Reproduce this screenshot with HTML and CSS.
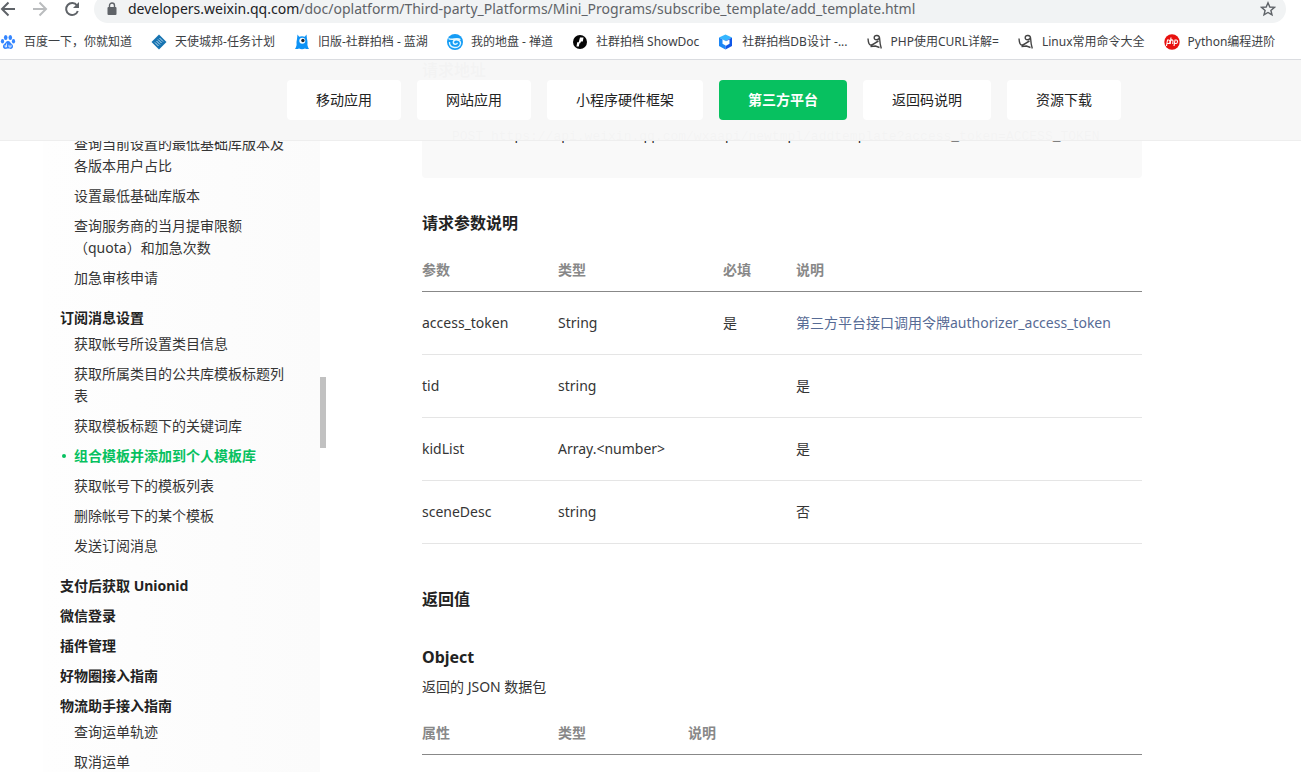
FILE: index.html
```html
<!DOCTYPE html>
<html lang="zh-CN">
<head>
    <meta charset="UTF-8">
    <meta name="viewport" content="width=device-width, initial-scale=1.0">
    <title>组合模板并添加到个人模板库</title>
    <link rel="stylesheet" href="styles.css">
</head>
<body>
    <header class="browser">
        <div class="toolbar">
            <button class="tool" aria-label="后退">
                <svg width="16" height="16" viewBox="0 0 16 16" fill="none" stroke="#5f6368" stroke-width="2"><path d="M15 8H2M8.500 1.500L2 8l6.500 6.500"/></svg>
            </button>
            <button class="tool" aria-label="前进">
                <svg width="16" height="16" viewBox="0 0 16 16" fill="none" stroke="#babcbe" stroke-width="2"><path d="M1 8h13M7.500 1.500L14 8l-6.500 6.500"/></svg>
            </button>
            <button class="tool" aria-label="重新加载">
                <svg width="16" height="16" viewBox="0 0 16 16"><path d="M13 4.500A6 6 0 1 0 13.800 10" fill="none" stroke="#5f6368" stroke-width="2"/><path d="M15 1v6H9z" fill="#5f6368"/></svg>
            </button>
            <div class="omnibox">
                <svg width="10" height="14" viewBox="0 0 10 14"><path d="M2.500 6V3.500a2.500 2.500 0 0 1 5 0V6" fill="none" stroke="#5f6368" stroke-width="1.400"/><rect x="0.500" y="5" width="9" height="8" rx="1" fill="#5f6368"/></svg>
                <span class="url"><b>developers.weixin.qq.com</b>/doc/oplatform/Third-party_Platforms/Mini_Programs/subscribe_template/add_template.html</span>
                <button class="star" aria-label="收藏">
                    <svg width="16" height="16" viewBox="0 0 16 16" fill="none" stroke="#5f6368" stroke-width="1.400"><path d="M8 1.800l1.800 4.200 4.600.4-3.500 3 1.100 4.500L8 11.500l-4 2.400 1.100-4.500-3.500-3L6.200 6z"/></svg>
                </button>
            </div>
        </div>
        <nav class="bookmarks">
            <a href="#">
                <svg width="16" height="16" viewBox="0 0 16 16" fill="#3385ff"><ellipse cx="5.700" cy="3.500" rx="1.800" ry="2.500"/><ellipse cx="10.300" cy="3.500" rx="1.800" ry="2.500"/><ellipse cx="2.500" cy="7.300" rx="1.600" ry="2.200"/><ellipse cx="13.500" cy="7.300" rx="1.600" ry="2.200"/><path d="M8 7c2 0 2.500 2 4 3.300 1.700 1.500 1.300 4.500-1.200 4.700-1.200 0-1.800-.4-2.800-.4s-1.600.4-2.800.4C2.700 14.800 2.300 11.800 4 10.300 5.500 9 6 7 8 7z"/><path d="M6.500 9.500v3.500H5.200v-2M9 10.800V13h2v-2.200" fill="none" stroke="#fff" stroke-width=".8"/></svg>
                百度一下，你就知道
            </a>
            <a href="#">
                <svg width="16" height="16" viewBox="0 0 16 16"><path d="M8 .5L15.500 8 8 15.500.5 8z" fill="#1673b1"/><path d="M4 8.500l3.500 3.500M5.500 7L9 10.500M7 5.500L10.500 9M8.500 4L12 7.500" stroke="#d3e8f5" stroke-width=".9"/></svg>
                天使城邦-任务计划
            </a>
            <a href="#">
                <svg width="16" height="16" viewBox="0 0 16 16"><path d="M3.500.5l1.700 2.200C6.800 2 9.200 2 10.800 2.700L12.500.5l.5 4.500c.6 2 .6 4 .4 6 .3 1.600.9 2.800 1.600 4-2 .3-3 0-4-.6-1.900 1.100-4.100 1.100-6 0-1 .6-2 .9-4 .6.700-1.200 1.300-2.400 1.600-4-.2-2-.2-4 .4-6z" fill="#0d92f5"/><circle cx="8.300" cy="6.800" r="3" fill="#fff"/><circle cx="8.900" cy="6.500" r="1.700" fill="#1b2733"/></svg>
                旧版-社群拍档 - 蓝湖
            </a>
            <a href="#">
                <svg width="16" height="16" viewBox="0 0 16 16"><circle cx="8" cy="8" r="8" fill="#149cf5"/><path d="M1.500 4.500c3.500 2.500 7.500-1.500 12 1M2.500 8c-.5 6.500 10 7.500 11 1.500.3-4-6.500-5-7.200-1.500-.2 2.800 3.900 3 4 .7" fill="none" stroke="#e5f8ff" stroke-width="1.400"/></svg>
                我的地盘 - 禅道
            </a>
            <a href="#">
                <svg width="16" height="16" viewBox="0 0 16 16"><circle cx="8" cy="8" r="7" fill="#050505"/><path d="M8 3.500h3.500L10.800 7.500H9L8.200 9.300H7.500L6.800 12.500H4.500L5.200 8.200H6.700z" fill="#fff"/></svg>
                社群拍档 ShowDoc
            </a>
            <a href="#">
                <svg width="16" height="16" viewBox="0 0 16 16"><path d="M7.500.5L14 3.500 7.500 7 1 3.500z" fill="#35b6ff"/><path d="M1 3.500L7.500 7v8.500L1 12z" fill="#1c86f5"/><path d="M14 3.500L7.500 7v8.500L14 12z" fill="#1157e8"/><path d="M4.500 5.500L8 7.200l3.500-1.700v4.200L8 11.700 4.500 9.700z" fill="#fff"/></svg>
                社群拍档DB设计 -...
            </a>
            <a href="#">
                <svg width="16" height="16" viewBox="0 0 16 16" fill="none" stroke="#444" stroke-width="1.400"><path d="M1 4.500c.3 4 1 7 3.500 6.500S9 8 11.500 7M12.500 4c0-3-5-3.500-5.300-.5-.2 3 4.500 3 5.300 0 .2 3 .5 7 1.800 11M3.500 12.500l5-.5 4 1.500"/></svg>
                PHP使用CURL详解=
            </a>
            <a href="#">
                <svg width="16" height="16" viewBox="0 0 16 16" fill="none" stroke="#444" stroke-width="1.400"><path d="M1 4.500c.3 4 1 7 3.500 6.500S9 8 11.500 7M12.500 4c0-3-5-3.500-5.300-.5-.2 3 4.500 3 5.300 0 .2 3 .5 7 1.800 11M3.500 12.500l5-.5 4 1.500"/></svg>
                Linux常用命令大全
            </a>
            <a href="#">
                <svg width="16" height="16" viewBox="0 0 16 16"><circle cx="8" cy="8" r="7.700" fill="#e8110f"/><path d="M2.500 12l1-6h1.300c1.600 0 1.500 3.500-.2 3.500H3.300M7 3.500L6.200 10M6.500 7c.5-1.500 2.700-1.500 2.500.3L8.700 10M10 12l1-6h1.300c1.700 0 1.500 3.500-.2 3.500h-1.300" fill="none" stroke="#fff" stroke-width="1.100"/></svg>
                Python编程进阶
            </a>
        </nav>
    </header>

    <div class="page">
        <nav class="tabs">
            <a href="#">移动应用</a>
            <a href="#">网站应用</a>
            <a href="#">小程序硬件框架</a>
            <a href="#" class="active">第三方平台</a>
            <a href="#">返回码说明</a>
            <a href="#">资源下载</a>
        </nav>

        <aside class="sidebar">
            <div class="menu">
                <section>
                    <ul class="first">
                        <li><a href="#">查询当前设置的最低基础库版本及各版本用户占比</a></li>
                        <li><a href="#">设置最低基础库版本</a></li>
                        <li><a href="#">查询服务商的当月提审限额（quota）和加急次数</a></li>
                        <li><a href="#">加急审核申请</a></li>
                    </ul>
                </section>
                <section>
                    <h4>订阅消息设置</h4>
                    <ul>
                        <li><a href="#">获取帐号所设置类目信息</a></li>
                        <li><a href="#">获取所属类目的公共库模板标题列表</a></li>
                        <li><a href="#">获取模板标题下的关键词库</a></li>
                        <li class="current"><a href="#">组合模板并添加到个人模板库</a></li>
                        <li><a href="#">获取帐号下的模板列表</a></li>
                        <li><a href="#">删除帐号下的某个模板</a></li>
                        <li><a href="#">发送订阅消息</a></li>
                    </ul>
                </section>
                <section><h4>支付后获取 Unionid</h4></section>
                <section><h4>微信登录</h4></section>
                <section><h4>插件管理</h4></section>
                <section><h4>好物圈接入指南</h4></section>
                <section>
                    <h4>物流助手接入指南</h4>
                    <ul>
                        <li><a href="#">查询运单轨迹</a></li>
                        <li><a href="#">取消运单</a></li>
                    </ul>
                </section>
            </div>
            <div class="scrollbar"><div class="thumb"></div></div>
        </aside>

        <main class="content">
            <h3>请求地址</h3>
            <pre><code>POST https://api.weixin.qq.com/wxaapi/newtmpl/addtemplate?access_token=ACCESS_TOKEN</code></pre>

            <h3>请求参数说明</h3>
            <table class="params">
                <thead>
                    <tr><th>参数</th><th>类型</th><th>必填</th><th>说明</th></tr>
                </thead>
                <tbody>
                    <tr><td>access_token</td><td>String</td><td>是</td><td><a href="#">第三方平台接口调用令牌authorizer_access_token</a></td></tr>
                    <tr><td>tid</td><td>string</td><td></td><td>是</td></tr>
                    <tr><td>kidList</td><td>Array.&lt;number&gt;</td><td></td><td>是</td></tr>
                    <tr><td>sceneDesc</td><td>string</td><td></td><td>否</td></tr>
                </tbody>
            </table>

            <h3 class="returns">返回值</h3>
            <h3 class="object">Object</h3>
            <p>返回的 JSON 数据包</p>
            <table class="result">
                <thead>
                    <tr><th>属性</th><th>类型</th><th>说明</th></tr>
                </thead>
            </table>
        </main>
    </div>
</body>
</html>
```
FILE: styles.css
```css
* {
    box-sizing: border-box;
}
body {
    display: flex;
    flex-direction: column;
    height: 100vh;
    margin: 0;
    overflow: hidden;
    background-color: #fff;
    color: #353535;
    font-family: "Noto Sans", "Noto Sans CJK SC", sans-serif;
    font-size: 14px;
    line-height: 22px;
}
a {
    color: inherit;
    text-decoration: none;
}
button {
    display: flex;
    padding: 0;
    border: none;
    background: none;
    cursor: pointer;
}
svg {
    display: block;
    flex: none;
}

/* browser bar */
.browser {
    flex: none;
    border-bottom: 1px solid #dadce0;
}
.toolbar {
    display: flex;
    align-items: flex-end;
    gap: 16px;
    height: 23px;
    padding-right: 15px;
}
.tool {
    height: 28px;
    align-items: center;
}
.omnibox {
    display: flex;
    flex: 1;
    align-items: center;
    gap: 11px;
    height: 28px;
    margin-left: -2px;
    padding: 0 10px 0 13px;
    border-radius: 14px;
    background-color: #f1f3f4;
}
.url {
    flex: 1;
    color: #5f6368;
    white-space: nowrap;
}
.url b {
    color: #202124;
    font-weight: normal;
}
.bookmarks {
    display: flex;
    align-items: center;
    gap: 19px;
    height: 36px;
    padding-top: 2px;
    overflow: hidden;
    color: #3c4043;
    font-size: 12px;
    white-space: nowrap;
}
.bookmarks a {
    display: flex;
    align-items: center;
    gap: 8px;
}

/* page */
.page {
    display: flex;
    flex: 1;
    position: relative;
    min-height: 0;
    overflow: hidden;
}
.tabs {
    display: flex;
    position: absolute;
    top: 0;
    left: 0;
    right: 0;
    z-index: 1;
    gap: 16px;
    padding: 20px 0 20px 287px;
    border-bottom: 1px solid #eee;
    background-color: rgba(247, 247, 247, 0.985);
}
.tabs a {
    padding: 9px 29px;
    border-radius: 4px;
    background-color: #fff;
    color: #222;
}
.tabs .active {
    background-color: #07c160;
    color: #fff;
    font-weight: bold;
}
.sidebar {
    display: flex;
    flex: none;
    width: 283px;
    margin: 81px 0 0 43px;
}
.menu {
    flex: 1;
    overflow: hidden;
    padding: 0 32px 0 17px;
    background: linear-gradient(to right, #fefefe, #fbfbfb);
    color: #353535;
}
.menu section {
    margin-bottom: 8px;
}
.menu h4 {
    margin: 0;
    color: #222;
    font-size: 14px;
}
.menu ul {
    margin: 4px 0 18px;
    padding-left: 14px;
    list-style: none;
}
.menu .first {
    margin-top: -8px;
}
.menu li {
    position: relative;
    margin-bottom: 8px;
}
.menu li:last-child {
    margin-bottom: 0;
}
.menu .current {
    color: #07c160;
    font-weight: bold;
}
.menu .current::before {
    content: "";
    position: absolute;
    top: 9px;
    left: -12px;
    width: 4px;
    height: 4px;
    border-radius: 50%;
    background-color: #07c160;
}
.scrollbar {
    width: 6px;
    padding-top: 236px;
}
.thumb {
    height: 71px;
    background-color: #c1c1c1;
}

.content {
    flex: 1;
    max-width: 816px;
    margin-top: -3px;
    padding-left: 96px;
}
h3 {
    margin: 32px 0 12px;
    color: #222;
    font-size: 16px;
    line-height: 26px;
}
h3:first-child {
    margin-top: 0;
}
pre {
    margin: 15px 0 32px;
    padding: 28px 30px 30px;
    border-radius: 4px;
    background-color: #f9f9f9;
    color: #222;
    font-family: "Liberation Mono", monospace;
    font-size: 13px;
}
pre code {
    font-family: inherit;
}
p {
    margin: 6px 0 13px;
}
.returns {
    margin-top: 42px;
}
.object {
    margin-bottom: 6px;
}
table {
    width: 100%;
    table-layout: fixed;
    border-spacing: 0;
}
th {
    padding: 11px 0 10px;
    border-bottom: 1px solid #888;
    color: #888;
    text-align: left;
}
td {
    height: 63px;
    padding: 20px 0;
    border-bottom: 1px solid #e5e5e5;
}
td a {
    color: #576b95;
}
.params th:nth-child(1),
.result th:nth-child(1) {
    width: 136px;
}
.params th:nth-child(2) {
    width: 165px;
}
.params th:nth-child(3) {
    width: 73px;
}
.result th:nth-child(2) {
    width: 130px;
}
```
